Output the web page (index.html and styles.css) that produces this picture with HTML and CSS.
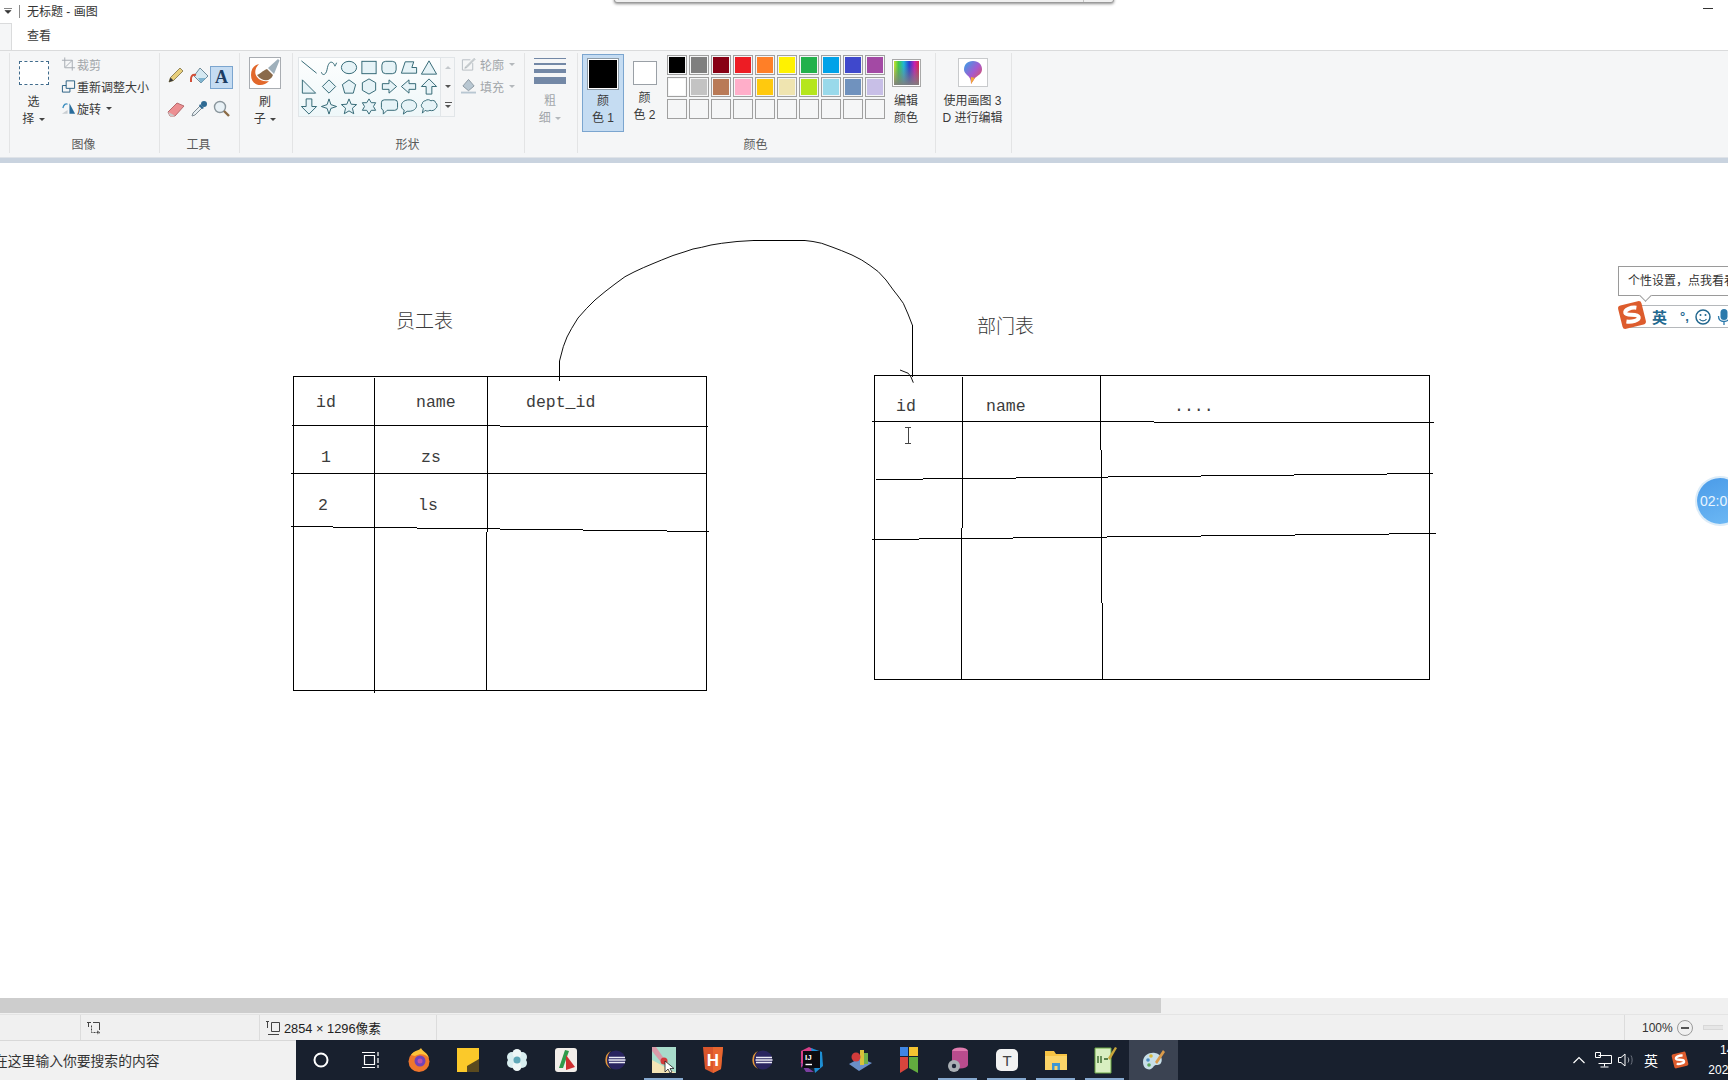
FILE: index.html
```html
<!DOCTYPE html>
<html lang="zh-CN">
<head>
<meta charset="utf-8">
<title>无标题 - 画图</title>
<link rel="stylesheet" href="styles.css">
</head>
<body>
<div class="app">
  <div class="popup-edge"><span class="popup-div"></span></div>

  <header class="titlebar">
    <svg class="qa-arrow" width="8" height="6" viewBox="0 0 8 6"><path d="M0 0.5H8M1 2.5H7L4 5.5Z" fill="#333" stroke="#333" stroke-width=".6"/></svg>
    <span class="qa-sep"></span>
    <span class="title">无标题 - 画图</span>
    <span class="minimize"></span>
  </header>

  <nav class="tabs">
    <span class="tab-home"></span>
    <span class="tab">查看</span>
  </nav>

  <section class="ribbon">
    <div class="group g-image">
      <div class="group-body">
        <div class="big-btn w48">
          <span class="select-box"></span>
          <span class="big-label">选<br>择 <i class="caret"></i></span>
        </div>
        <ul class="small-list">
          <li class="small-row muted">
            <svg class="ico16" viewBox="0 0 16 16"><path d="M4 1V12H15M1 4H12V15M5 11L12 4" fill="none" stroke="#a4aab0"/></svg>裁剪
          </li>
          <li class="small-row">
            <svg class="ico16" viewBox="0 0 16 16"><path d="M5.5 2.5H14.5V10.5H5.5ZM1.5 7.5H5.5M1.5 7.5V14.5H9.5V10.5" fill="none" stroke="#245c80"/></svg>重新调整大小
          </li>
          <li class="small-row">
            <svg class="ico16" viewBox="0 0 16 16"><path d="M9 3L15 14H9Z" fill="#2a6d9c"/><path d="M1 14L7 10V14Z" fill="#c9ced2"/><path d="M2 8C3 4 5 3 7 4" fill="none" stroke="#3d8fc0" stroke-width="1.4"/></svg>旋转 <i class="caret"></i>
          </li>
        </ul>
      </div>
      <div class="group-label">图像</div>
    </div>

    <div class="group g-tools">
      <div class="group-body tool-grid">
        <span class="tool">
          <svg width="18" height="18" viewBox="0 0 18 18"><path d="M2 16L3.5 11.5L13 2L16 5L6.5 14.5Z" fill="#e8cf7c" stroke="#7d7042" stroke-width=".8"/><path d="M2 16L3.5 11.5L6.5 14.5Z" fill="#3a3a3a"/></svg>
        </span>
        <span class="tool">
          <svg width="20" height="20" viewBox="0 0 20 20"><path d="M11 2L19 10L12 17L5 10Z" fill="#d4e8f1" stroke="#6f8b9a"/><path d="M9 12L12 17L17 12Z" fill="#7fb4d0"/><path d="M7 9C3 8 2 11 2 13V16" fill="none" stroke="#d24f38" stroke-width="2"/></svg>
        </span>
        <span class="tool tool-active">A</span>
        <span class="tool">
          <svg width="20" height="20" viewBox="0 0 20 20"><path d="M2 13L11 4L18 7L9 17L4 17Z" fill="#ec8f92" stroke="#b56a6d"/><path d="M2 13L6 15L9 17L4 17Z" fill="#c9c9c9"/></svg>
        </span>
        <span class="tool">
          <svg width="20" height="20" viewBox="0 0 20 20"><path d="M3 17L4 14L11 7L13 9L6 16Z" fill="#e7eef2" stroke="#7f8c94"/><path d="M11 5L15 9L13 10L10 7Z" fill="#2e6a93"/><circle cx="15" cy="5" r="3" fill="#2e6a93"/></svg>
        </span>
        <span class="tool">
          <svg width="20" height="20" viewBox="0 0 20 20"><circle cx="8" cy="8" r="5.5" fill="#e8f1f6" stroke="#8a969d" stroke-width="1.4"/><path d="M12 12L17 17" stroke="#8b6b45" stroke-width="2.4"/></svg>
        </span>
      </div>
      <div class="group-label">工具</div>
    </div>

    <div class="group g-brush">
      <div class="group-body col-center">
        <span class="brush-box">
          <svg width="30" height="30" viewBox="0 0 30 30"><path d="M1 17C1 11 4 7 9 6C5 10 4 15 7 19C10 23 15 24 19 23C13 30 1 28 1 17Z" fill="#e2682b"/><path d="M7 17C10 16 12 13 17 11L23 17C21 23 13 25 7 17Z" fill="#8a6a4a"/><path d="M18 10L28 1L29.500 2.500L24 16Z" fill="#9fb0bb"/></svg>
        </span>
        <span class="big-label">刷<br>子 <i class="caret"></i></span>
      </div>
      <div class="group-label"></div>
    </div>

    <div class="group g-shapes">
      <div class="group-body shapes-body">
        <div class="gallery">
          <div class="shape-grid">
            <svg class="shape" viewBox="0 0 20 20"><path d="M2 3L18 16"/></svg>
            <svg class="shape" viewBox="0 0 20 20"><path class="open" d="M2 15C3 19 7 18 8 12S11 3 14 5S15 12 18 5"/></svg>
            <svg class="shape" viewBox="0 0 20 20"><ellipse cx="10" cy="10" rx="8" ry="6.5"/></svg>
            <svg class="shape" viewBox="0 0 20 20"><rect x="2.5" y="3.5" width="15" height="13"/></svg>
            <svg class="shape" viewBox="0 0 20 20"><rect x="2.5" y="3.5" width="15" height="13" rx="4"/></svg>
            <svg class="shape" viewBox="0 0 20 20"><path d="M2 16L6 4H15L13 10H18V16Z"/></svg>
            <svg class="shape" viewBox="0 0 20 20"><path d="M10 3L18 17H2Z"/></svg>
            <svg class="shape" viewBox="0 0 20 20"><path d="M3 3V17H17Z"/></svg>
            <svg class="shape" viewBox="0 0 20 20"><path d="M10 3L17 10L10 17L3 10Z"/></svg>
            <svg class="shape" viewBox="0 0 20 20"><path d="M10 3L17 8L14.5 17H5.5L3 8Z"/></svg>
            <svg class="shape" viewBox="0 0 20 20"><path d="M10 2L17 6V14L10 18L3 14V6Z"/></svg>
            <svg class="shape" viewBox="0 0 20 20"><path d="M3 7H10V3L18 10L10 17V13H3Z"/></svg>
            <svg class="shape" viewBox="0 0 20 20"><path d="M17 7H10V3L2 10L10 17V13H17Z"/></svg>
            <svg class="shape" viewBox="0 0 20 20"><path d="M10 2L18 10H13V18H7V10H2Z"/></svg>
            <svg class="shape" viewBox="0 0 20 20"><path d="M10 18L18 10H13V2H7V10H2Z"/></svg>
            <svg class="shape" viewBox="0 0 20 20"><path d="M10 2L12 8L18 10L12 12L10 18L8 12L2 10L8 8Z"/></svg>
            <svg class="shape" viewBox="0 0 20 20"><path d="M10 2L12.3 7.6L18 8L13.6 11.8L15 17.6L10 14.6L5 17.6L6.4 11.8L2 8L7.7 7.6Z"/></svg>
            <svg class="shape" viewBox="0 0 20 20"><path d="M10 2L12.4 6H17L14.7 10L17 14H12.4L10 18L7.6 14H3L5.3 10L3 6H7.6Z"/></svg>
            <svg class="shape" viewBox="0 0 20 20"><path d="M5 3H16A3 3 0 0 1 19 6V11A3 3 0 0 1 16 14H8L4 18V14A3 3 0 0 1 2 11V6A3 3 0 0 1 5 3Z"/></svg>
            <svg class="shape" viewBox="0 0 20 20"><path d="M10 3C15 3 18 6 18 9S15 15 10 15H8L4 18L5 14C3 13 2 11 2 9C2 6 5 3 10 3Z"/></svg>
            <svg class="shape" viewBox="0 0 20 20"><path d="M6 4C8 2 11 3 12 4C14 3 17 4 17 6C19 7 19 11 17 12C16 14 13 15 11 14C9 15 7 15 6 14L3 17L4 12C2 11 1 8 3 7C3 5 5 4 6 4Z"/></svg>
          </div>
          <div class="gallery-scroll">
            <span class="gs-btn"><i class="tri-up"></i></span>
            <span class="gs-btn"><i class="tri-down"></i></span>
            <span class="gs-btn"><i class="tri-more"></i></span>
          </div>
        </div>
        <ul class="small-list outline-list">
          <li class="small-row muted">
            <svg class="ico16" viewBox="0 0 16 16"><path d="M1.5 3.5H10M1.5 3.5V14.5H12.5V7" fill="none" stroke="#b5bcc2"/><path d="M5 11L14 2L15 3L6 12L4 12.5Z" fill="#d6dadc" stroke="#9aa2a8" stroke-width=".6"/></svg>轮廓 <i class="caret faded"></i>
          </li>
          <li class="small-row muted">
            <svg class="ico16" viewBox="0 0 16 16"><path d="M8 1L14 8L8 13L2 8Z" fill="#b8c7d2" stroke="#8b98a1"/><path d="M0 15H16" stroke="#b8c7d2" stroke-width="2"/></svg>填充 <i class="caret faded"></i>
          </li>
        </ul>
      </div>
      <div class="group-label">形状</div>
    </div>

    <div class="group g-stroke">
      <div class="group-body col-center">
        <span class="stroke-icon">
          <span class="stroke s1"></span>
          <span class="stroke s2"></span>
          <span class="stroke s3"></span>
          <span class="stroke s4"></span>
        </span>
        <span class="big-label muted">粗<br>细 <i class="caret faded"></i></span>
      </div>
      <div class="group-label"></div>
    </div>

    <div class="group g-colors">
      <div class="group-body colors-body">
        <div class="color-btn active">
          <span class="swatch-large"></span>
          <span class="big-label">颜<br>色 1</span>
        </div>
        <div class="color-btn second">
          <span class="swatch-second"></span>
          <span class="big-label">颜<br>色 2</span>
        </div>
        <div class="palette">
          <span class="cell"><b style="background:#000000"></b></span>
          <span class="cell"><b style="background:#7f7f7f"></b></span>
          <span class="cell"><b style="background:#880015"></b></span>
          <span class="cell"><b style="background:#ed1c24"></b></span>
          <span class="cell"><b style="background:#ff7f27"></b></span>
          <span class="cell"><b style="background:#fff200"></b></span>
          <span class="cell"><b style="background:#22b14c"></b></span>
          <span class="cell"><b style="background:#00a2e8"></b></span>
          <span class="cell"><b style="background:#3f48cc"></b></span>
          <span class="cell"><b style="background:#a349a4"></b></span>
          <span class="cell"><b style="background:#ffffff"></b></span>
          <span class="cell"><b style="background:#c3c3c3"></b></span>
          <span class="cell"><b style="background:#b97a57"></b></span>
          <span class="cell"><b style="background:#ffaec9"></b></span>
          <span class="cell"><b style="background:#ffc90e"></b></span>
          <span class="cell"><b style="background:#efe4b0"></b></span>
          <span class="cell"><b style="background:#b5e61d"></b></span>
          <span class="cell"><b style="background:#99d9ea"></b></span>
          <span class="cell"><b style="background:#7092be"></b></span>
          <span class="cell"><b style="background:#c8bfe7"></b></span>
          <span class="cell"></span><span class="cell"></span><span class="cell"></span><span class="cell"></span><span class="cell"></span>
          <span class="cell"></span><span class="cell"></span><span class="cell"></span><span class="cell"></span><span class="cell"></span>
        </div>
        <div class="edit-colors">
          <span class="rainbow"></span>
          <span class="big-label">编辑<br>颜色</span>
        </div>
      </div>
      <div class="group-label">颜色</div>
    </div>

    <div class="group g-3d">
      <div class="group-body col-center">
        <span class="pin-box">
          <svg width="22" height="25" viewBox="0 0 22 25">
            <defs><linearGradient id="pin" x1="0" y1="0" x2="1" y2="1"><stop offset="0" stop-color="#2fa6e8"/><stop offset=".5" stop-color="#a45ad0"/><stop offset="1" stop-color="#f0503c"/></linearGradient></defs>
            <path d="M11 1C17 1 20 5 20 9.500C20 14 15 16 13 18L9 24C9 20 8 17 5 15C3 13 2 11.500 2 9.500C2 5 5 1 11 1Z" fill="url(#pin)"/>
            <path d="M9 24L13 18L9 17Z" fill="#f2a63a"/>
          </svg>
        </span>
        <span class="big-label nowrap">使用画图 3<br>D 进行编辑</span>
      </div>
      <div class="group-label"></div>
    </div>
  </section>
  <div class="ribbon-edge"></div>

  <main class="canvas">
    <svg class="drawing" viewBox="0 163 1728 835" width="1728" height="835">
      <g class="ink">
        <path d="M293.500 376.500H706.500V690.500H293.500Z"/>
        <path d="M374.500 378V693M487.500 376V532M486.500 532V690"/>
        <path d="M292 425.500H500M500 426.500H708"/>
        <path d="M291 473.500H706"/>
        <path d="M291 526.500H333M333 527.500H417M417 528.500H500M500 529.500H583M583 530.500H667M667 531.500H709"/>
        <path d="M874.500 375.500H1429.500V679.500H874.500Z"/>
        <path d="M962.500 377V528M961.500 528V679M1100.500 375V450M1101.500 450V603M1102.500 603V679"/>
        <path d="M872 421.500H1154M1154 422.500H1434"/>
        <path d="M876 479.500H923M923 478.500H1016M1016 477.500H1108M1108 476.500H1201M1201 475.500H1294M1294 474.500H1387M1387 473.500H1433"/>
        <path d="M872 539.500H919M919 538.500H1013M1013 537.500H1107M1107 536.500H1201M1201 535.500H1295M1295 534.500H1389M1389 533.500H1436"/>
        <path d="M559.500 381V361M912.500 325V377M753 240.500H805"/>
      </g>
      <polyline class="pen" points="559.500,361 563.300,346.700 567,337 571.700,328.300 578,318 586.700,308.300 595,300 605,291.700 615,284 625,276.700 634,272 643.300,267.700 652,264 661.700,260 673,255.500 685,251.700 693,249 701.700,247.300 711,245 721.700,243.300 737,241.500 753.300,240.500"/>
      <polyline class="pen" points="805,240.500 813,241.500 821.700,243.300 832,247 841.700,250.700 852,255 861.700,260 870,265.500 878.300,271.700 886,280 893.300,290 898,296 903.300,303.300 908,314 912.300,325"/>
      <polyline class="pen" points="900,370 908.300,373.300 911,377 913.300,382.700"/>
      <path class="cursor-i" d="M905 427.500H911M908 427.500V443M905 443.500H911"/>

      <text class="cjk" x="396" y="328">员工表</text>
      <text class="cjk" x="977" y="333">部门表</text>
      <text class="mono" x="316" y="407">id</text>
      <text class="mono" x="416" y="407">name</text>
      <text class="mono" x="526" y="407">dept_id</text>
      <text class="mono" x="321" y="462">1</text>
      <text class="mono" x="421" y="462">zs</text>
      <text class="mono" x="318" y="510">2</text>
      <text class="mono" x="418" y="510">ls</text>
      <text class="mono" x="896" y="411">id</text>
      <text class="mono" x="986" y="411">name</text>
      <text class="mono" x="1174" y="411">....</text>
    </svg>

    <div class="ime-tip">个性设置，点我看看吧</div>
    <div class="ime-bar">
      <span class="ime-zh">英</span>
      <span class="ime-punct">°,</span>
      <svg class="ime-ico" width="18" height="18" viewBox="0 0 18 18"><circle cx="9" cy="9" r="7" fill="none" stroke="#23688f" stroke-width="1.500"/><circle cx="6.500" cy="7" r="1" fill="#23688f"/><circle cx="11.500" cy="7" r="1" fill="#23688f"/><path d="M5.500 11C7 13.500 11 13.500 12.500 11" fill="none" stroke="#23688f" stroke-width="1.200"/></svg>
      <svg class="ime-ico" width="14" height="18" viewBox="0 0 14 18"><rect x="3.500" y="1" width="7" height="11" rx="3.500" fill="#2b79ab"/><path d="M1.500 8C1.500 12 4 13.500 7 13.500S12.500 12 12.500 8M7 14V17" fill="none" stroke="#2b79ab" stroke-width="1.300"/></svg>
    </div>
    <svg class="ime-logo" width="30" height="30" viewBox="0 0 30 30">
      <rect x="3" y="3" width="24" height="24" rx="3" transform="rotate(-14 15 15)" fill="#dd5c2d"/>
      <path d="M21 9C16 7 9 8 9 11.500C9 15 21 14 21 18.500C21 22 13 22 8 20" fill="none" stroke="#fff" stroke-width="4" transform="rotate(-14 15 15)"/>
    </svg>
    <div class="timer">02:07</div>
  </main>

  <div class="hscroll"><span class="hscroll-thumb"></span></div>

  <footer class="status">
    <span class="st-cell st-a"></span>
    <span class="st-cell st-b">
      <svg width="16" height="16" viewBox="0 0 16 16"><path d="M2.500 2V7M1 2.500H5M7 2.500H13.500V10" fill="none" stroke="#444"/><path d="M5.500 5.500V12.500H13M11 11L14 12.500L11 14" fill="none" stroke="#444" stroke-dasharray="2 1"/></svg>
    </span>
    <span class="st-cell st-c">
      <svg width="16" height="16" viewBox="0 0 16 16"><path d="M1 1.500H4M2.500 1.500V8M6.500 2.500H14.500V11.500H6.500ZM3 14.500H14" fill="none" stroke="#444"/></svg>
      <span class="st-size">2854 × 1296像素</span>
    </span>
    <span class="st-spacer"></span>
    <span class="st-zoom">
      <span class="st-pct">100%</span>
      <span class="zoom-minus"></span>
      <span class="zoom-track"></span>
    </span>
  </footer>

  <div class="taskbar">
    <div class="search"><span>在这里输入你要搜索的内容</span></div>
    <div class="task-items">
      <span class="task-item">
        <svg width="24" height="24" viewBox="0 0 24 24"><circle cx="12" cy="12" r="6.500" fill="none" stroke="#fff" stroke-width="2"/></svg>
      </span>
      <span class="task-item">
        <svg width="24" height="24" viewBox="0 0 24 24"><path d="M6.500 7.500H16.500V16.500H6.500ZM4 4.500H17M4 19.500H17M20 4V8M20 10V15M20 17V20" fill="none" stroke="#fff" stroke-width="1.200"/></svg>
      </span>
      <span class="task-item">
        <svg width="26" height="26" viewBox="0 0 26 26"><circle cx="13" cy="14.500" r="10.500" fill="#f0762c"/><path d="M5 8C8 3 13 4 15 1C16 4 21 5 23 11C20 7 14 6 9 9Z" fill="#fcc23a"/><circle cx="14" cy="14" r="5.500" fill="#7343b8"/><circle cx="14" cy="14" r="2.500" fill="#c04fa9"/></svg>
      </span>
      <span class="task-item">
        <svg width="24" height="24" viewBox="0 0 24 24"><path d="M1 0H23V24H1Z" fill="#fbc92a"/><path d="M23 11V24H11V18Z" fill="#5a4a1f"/></svg>
      </span>
      <span class="task-item">
        <svg width="24" height="24" viewBox="0 0 24 24"><circle cx="7" cy="9" r="5" fill="#d8eef0"/><circle cx="17" cy="9" r="5" fill="#d8eef0"/><circle cx="7" cy="15" r="5" fill="#d8eef0"/><circle cx="17" cy="15" r="5" fill="#d8eef0"/><circle cx="12" cy="5.500" r="4.500" fill="#eef7f7"/><circle cx="12" cy="18.500" r="4.500" fill="#eef7f7"/><circle cx="12" cy="12" r="3.500" fill="#5fa8b8"/></svg>
      </span>
      <span class="task-item">
        <svg width="24" height="26" viewBox="0 0 24 26"><rect x="1" y="1" width="22" height="24" rx="3" fill="#f2eeea"/><path d="M5 21L11 3L15 4L9 21Z" fill="#2f9a4a"/><path d="M12 8L21 20L12 23Z" fill="#cf2f30"/></svg>
      </span>
      <span class="task-item">
        <svg width="26" height="26" viewBox="0 0 26 26"><circle cx="14" cy="13" r="9.500" fill="#29245f"/><path d="M9 4A10 10 0 0 0 9 22A12 12 0 0 1 9 4Z" fill="#e79a3b"/><path d="M7 10.500H23M6.500 13H23.500M7 15.500H23" stroke="#ecebf5" stroke-width="1.300"/></svg>
      </span>
      <span class="task-item open">
        <svg width="26" height="28" viewBox="0 0 26 28"><rect x="1" y="1" width="24" height="26" fill="#a8dccb"/><path d="M1 14L25 27H1Z" fill="#f4e4b5"/><path d="M5 1L14 14L9 15L1 5V1Z" fill="#d99aa8"/><circle cx="13" cy="15" r="3.500" fill="#d23b3b"/><path d="M14 15V26L17 23L19 27L21 26L19 22.500H23Z" fill="#fff" stroke="#222" stroke-width=".8"/></svg>
      </span>
      <span class="task-item">
        <svg width="22" height="26" viewBox="0 0 22 26"><path d="M1 0H21L19 22L11 26L3 22Z" fill="#d9552c"/><path d="M11 0H21L19 22L11 26Z" fill="#e8662f"/><text class="h-glyph" x="11" y="18.500">H</text></svg>
      </span>
      <span class="task-item">
        <svg width="26" height="26" viewBox="0 0 26 26"><circle cx="14" cy="13" r="9.500" fill="#29245f"/><path d="M9 4A10 10 0 0 0 9 22A12 12 0 0 1 9 4Z" fill="#e79a3b"/><path d="M7 10.500H23M6.500 13H23.500M7 15.500H23" stroke="#ecebf5" stroke-width="1.300"/></svg>
      </span>
      <span class="task-item">
        <svg width="26" height="28" viewBox="0 0 26 28"><path d="M3 5L11 1L15 3L3 22Z" fill="#d83f87"/><path d="M13 2L24 6L25 20L17 27Z" fill="#1e8fd4"/><path d="M2 16L8 26H16Z" fill="#7b3fa0"/><rect x="5" y="5" width="17" height="17" fill="#0b0b10"/><text class="ij-glyph" x="7" y="14">IJ</text><path d="M7.500 18.500H14" stroke="#fff" stroke-width="1.400"/></svg>
      </span>
      <span class="task-item">
        <svg width="26" height="24" viewBox="0 0 26 24"><path d="M2 16L13 10L25 15L12 23Z" fill="#6a8fc8"/><rect x="13" y="2" width="4" height="15" fill="#d9c23a"/><rect x="17" y="5" width="4" height="11" fill="#6fb04b"/><circle cx="9" cy="9" r="4.500" fill="#d23b3b"/></svg>
      </span>
      <span class="task-item">
        <svg width="20" height="28" viewBox="0 0 20 28"><rect x="1" y="1" width="8" height="9" fill="#3f86e4"/><rect x="10" y="1" width="9" height="9" fill="#f4c331"/><path d="M1 11H9V22L1 27Z" fill="#d8453d"/><path d="M10 11H19V27L10 22Z" fill="#62ac3f"/></svg>
      </span>
      <span class="task-item">
        <svg width="24" height="28" viewBox="0 0 24 28"><ellipse cx="14" cy="5" ry="3.500" rx="8" fill="#e07cb0"/><rect x="6" y="5" width="16" height="14" fill="#b94c8d"/><ellipse cx="14" cy="19" rx="8" ry="3.500" fill="#b94c8d"/><circle cx="8" cy="20" r="6" fill="#aab0b5"/><circle cx="8" cy="20" r="2.200" fill="#20283a"/></svg>
      </span>
      <span class="task-item">
        <svg width="24" height="24" viewBox="0 0 24 24"><rect x="1" y="1" width="22" height="22" rx="5" fill="#f2f2f2"/><text class="t-glyph" x="12" y="17.500">T</text></svg>
      </span>
      <span class="task-item">
        <svg width="24" height="22" viewBox="0 0 24 22"><path d="M1 2H10L12 5H23V21H1Z" fill="#f6c344"/><path d="M1 7H23V21H1Z" fill="#fbd468"/><path d="M8 21V14H16V21H13.500V17H10.500V21Z" fill="#3d97d3"/></svg>
      </span>
      <span class="task-item">
        <svg width="24" height="28" viewBox="0 0 24 28"><path d="M2 2H18V27H2Z" fill="#d9efc1" stroke="#6aa644"/><path d="M5 10V17M8 10V17M11 13H15" stroke="#2f5f23" stroke-width="1.300"/><path d="M15 12L22 1L24 2L17 14Z" fill="#c9a63a"/></svg>
      </span>
      <span class="task-item current">
        <svg width="26" height="26" viewBox="0 0 26 26"><path d="M2 15C2 8 9 5 14 6C20 7 22 12 20 16C18 19 15 17 13 19C11 22 9 23 6 22C3 21 2 18 2 15Z" fill="#c8dfe8"/><circle cx="7" cy="13" r="1.800" fill="#4b8cc4"/><circle cx="10" cy="9" r="1.800" fill="#d8b93a"/><circle cx="8" cy="18" r="1.800" fill="#5aa65a"/><path d="M14 15L22 3L24 5L16 17Z" fill="#d99a4a"/></svg>
      </span>
    </div>
    <div class="tray">
      <span class="tray-item w24">
        <svg width="14" height="10" viewBox="0 0 14 10"><path d="M1.500 8L7 2.500L12.500 8" fill="none" stroke="#fff" stroke-width="1.200"/></svg>
      </span>
      <span class="tray-item w24">
        <svg width="18" height="16" viewBox="0 0 18 16"><path d="M4.500 3.500H17.500V11.500H4.500M1.500 .5H6.500V5.500H1.500ZM10.500 11.500V14.500M6.500 15H14.500" fill="none" stroke="#fff"/></svg>
      </span>
      <span class="tray-item w22">
        <svg width="18" height="14" viewBox="0 0 18 14"><path d="M1.500 4.500H4L8 1V13L4 9.500H1.500Z" fill="none" stroke="#fff"/><path d="M11 4.500C12 6 12 8 11 9.500" fill="none" stroke="#b6bac1"/><path d="M14 2.500C15.500 5 15.500 9 14 11.500" fill="none" stroke="#6e7480"/></svg>
      </span>
      <span class="tray-item w28 tray-text">英</span>
      <span class="tray-item w30">
        <svg width="18" height="18" viewBox="0 0 30 30"><rect x="3" y="3" width="24" height="24" rx="3" transform="rotate(-14 15 15)" fill="#dd5c2d"/><path d="M21 9C16 7 9 8 9 11.500C9 15 21 14 21 18.500C21 22 13 22 8 20" fill="none" stroke="#fff" stroke-width="4" transform="rotate(-14 15 15)"/></svg>
      </span>
      <span class="clock">
        <span class="clock-line">14:32</span>
        <span class="clock-line">2021/3/12</span>
      </span>
    </div>
  </div>
</div>
</body>
</html>
```
FILE: styles.css
```css
* { box-sizing: border-box; }
html, body { margin: 0; padding: 0; }
body { background: #fff; overflow: hidden; }
ul { list-style: none; margin: 0; padding: 0; }

.app {
  position: relative;
  width: 1728px;
  height: 1080px;
  overflow: hidden;
  display: flex;
  flex-direction: column;
  font-family: "Liberation Sans", "Noto Sans CJK SC", sans-serif;
  font-size: 12px;
  color: #3a3a3a;
}

.popup-edge {
  position: absolute;
  left: 614px;
  top: -10px;
  width: 500px;
  height: 13px;
  background: #f0f0f0;
  border: 1px solid #9a9a9a;
  border-radius: 0 0 3px 3px;
  box-shadow: 0 1px 3px rgba(0, 0, 0, .45);
  z-index: 3;
}
.popup-div {
  position: absolute;
  left: 468px;
  top: 0;
  bottom: 0;
  border-left: 1px solid #c4c4c4;
}

/* title bar */
.titlebar {
  height: 22px;
  flex: none;
  display: flex;
  align-items: center;
  background: #fff;
}
.qa-arrow { margin-left: 4px; }
.qa-sep { width: 1px; height: 13px; background: #8c8c8c; margin-left: 7px; }
.title { margin-left: 7px; margin-top: -2px; color: #333; white-space: nowrap; }
.minimize { width: 10px; height: 1px; background: #333; margin-left: auto; margin-right: 15px; margin-top: -6px; }

.tabs {
  height: 28px;
  flex: none;
  display: flex;
  background: #fff;
}
.tab-home {
  width: 12px;
  margin-top: 1px;
  background: #f5f6f7;
  border-top: 1px solid #dadbdc;
  border-right: 1px solid #dadbdc;
}
.tab { margin-left: 15px; line-height: 28px; color: #3a3a3a; }

/* ribbon */
.ribbon {
  height: 107px;
  flex: none;
  display: flex;
  padding-left: 9px;
  background: #f5f6f7;
  border-top: 1px solid #dadbdc;
}
.ribbon-edge {
  height: 6px;
  flex: none;
  background: #c9d3df;
  border-top: 1px solid #dfe3e8;
}
.group {
  display: flex;
  flex-direction: column;
  border-left: 1px solid #e3e4e5;
  margin-top: 2px;
  height: 100px;
}
.group-body { height: 80px; flex: none; display: flex; align-items: flex-start; }
.group-label {
  height: 20px;
  flex: none;
  padding-top: 2px;
  margin-left: -2px;
  line-height: 20px;
  text-align: center;
  color: #5a5a5a;
}
.g-image { width: 150px; }
.g-tools { width: 80px; }
.g-brush { width: 53px; }
.g-shapes { width: 232px; }
.g-stroke { width: 53px; }
.g-colors { width: 358px; }
.g-3d { width: 77px; border-right: 1px solid #e3e4e5; }

.big-label {
  display: block;
  text-align: center;
  line-height: 16.500px;
  color: #3a3a3a;
}
.nowrap { white-space: nowrap; }
.muted, .big-label.muted { color: #a2a6aa; }
.caret {
  display: inline-block;
  width: 0;
  height: 0;
  border: 3px solid transparent;
  border-top: 3px solid #444;
  border-bottom: 0;
  vertical-align: middle;
  margin-left: 1px;
}
.caret.faded { border-top-color: #b4b8bc; }

.col-center { flex-direction: column; align-items: center; margin-left: -2px; }

.big-btn { display: flex; flex-direction: column; align-items: center; padding-top: 8px; }
.w48 { width: 47px; }
.select-box {
  width: 30px;
  height: 24px;
  border: 1px dashed #3f6b8c;
  background: #fff;
  margin-bottom: 9px;
}
.small-list { margin-left: 4px; }
.small-row {
  display: flex;
  align-items: center;
  height: 22px;
  white-space: nowrap;
  gap: 1px;
}
.small-row .caret { margin-left: 4px; }
.ico16 { width: 15px; height: 16px; flex: none; }

/* tools */
.tool-grid {
  display: grid;
  grid-template-columns: repeat(3, 23px);
  grid-template-rows: 22px 22px;
  row-gap: 11px;
  padding: 13px 0 0 4px;
}
.tool { display: flex; align-items: center; justify-content: center; }
.tool-active {
  background: #c5dcf2;
  border: 1px solid #7ba5cf;
  font-family: "Liberation Serif", serif;
  font-weight: 700;
  font-size: 18px;
  color: #1d3c63;
}

/* brush */
.brush-box {
  width: 32px;
  height: 32px;
  margin-top: 4px;
  margin-bottom: 5px;
  background: #fff;
  border: 1px solid #a9adb2;
  display: flex;
  align-items: center;
  justify-content: center;
}

/* shapes */
.shapes-body { padding-left: 5px; }
.gallery {
  display: flex;
  width: 157px;
  height: 60px;
  margin-top: 4px;
  border: 1px solid #e1e5e8;
}
.shape-grid {
  display: grid;
  grid-template-columns: repeat(7, 20px);
  grid-auto-rows: 19.300px;
  width: 141px;
  background: linear-gradient(180deg, #fdfefe, #eef7f9);
}
.shape { width: 20px; height: 19px; fill: #e6f3f7; stroke: #2f6572; stroke-width: 1; }
.shape .open { fill: none; }
.gallery-scroll { flex: 1; display: flex; flex-direction: column; border-left: 1px solid #e1e5e8; }
.gs-btn { flex: 1; display: flex; align-items: center; justify-content: center; }
.tri-up, .tri-down { width: 0; height: 0; border: 3px solid transparent; }
.tri-up { border-top: 0; border-bottom-color: #c4c8cc; }
.tri-down { border-bottom: 0; border-top-color: #555; }
.tri-more {
  width: 0; height: 0;
  border: 3px solid transparent;
  border-bottom: 0;
  border-top-color: #555;
  position: relative;
}
.tri-more::before {
  content: "";
  position: absolute;
  left: -3px;
  top: -6px;
  width: 7px;
  height: 1px;
  background: #555;
}
.outline-list { margin-left: 6px; }
.outline-list .ico16 { margin-right: 3px; }

/* stroke */
.stroke-icon { display: flex; flex-direction: column; width: 32px; margin-top: 4px; margin-bottom: 8px; height: 28px; }
.stroke { display: block; background: #7388a6; }
.s1 { height: 1px; margin-top: 1px; }
.s2 { height: 2px; margin-top: 4px; }
.s3 { height: 4px; margin-top: 4px; }
.s4 { height: 7px; margin-top: 4px; }

/* colours */
.colors-body { padding-left: 4px; }
.color-btn { display: flex; flex-direction: column; align-items: center; }
.color-btn.active {
  width: 42px;
  height: 78px;
  margin-top: 1px;
  background: #c5dcf2;
  border: 1px solid #7ba5cf;
  padding-top: 3px;
}
.swatch-large {
  width: 32px;
  height: 32px;
  background: #000;
  border: 1px solid #8c9aa6;
  box-shadow: inset 0 0 0 1px #fff;
  margin-bottom: 3px;
}
.color-btn.second { width: 41px; padding-top: 8px; }
.swatch-second {
  width: 24px;
  height: 24px;
  background: #fff;
  border: 1px solid #9aa0a6;
  margin-bottom: 5px;
}
.palette {
  display: grid;
  grid-template-columns: repeat(10, 20px);
  grid-auto-rows: 20px;
  gap: 2px;
  margin-left: 2px;
  margin-top: 2px;
}
.cell {
  display: block;
  border: 1px solid #a0a0a0;
  padding: 1px;
}
.cell b { display: block; width: 100%; height: 100%; }
.edit-colors { display: flex; flex-direction: column; align-items: center; width: 30px; margin-left: 6px; padding-top: 6px; }
.rainbow {
  width: 29px;
  height: 28px;
  border: 1px solid #a8a8a8;
  box-shadow: inset 0 0 0 1px #fff;
  background:
    linear-gradient(180deg, rgba(128,128,128,0) 20%, #7f7f7f 100%),
    linear-gradient(90deg, #e8e82a, #45c845, #1fb5d8, #2a3fd0, #c81fb0, #d83030);
  margin-bottom: 6px;
}

/* 3D */
.pin-box {
  width: 30px;
  height: 29px;
  margin-top: 5px;
  margin-bottom: 6px;
  background: #fff;
  border: 1px solid #c8cacc;
  display: flex;
  align-items: center;
  justify-content: center;
}

/* canvas */
.canvas {
  position: relative;
  height: 835px;
  flex: none;
  background: #fff;
  overflow: hidden;
}
.drawing { display: block; }
.ink { fill: none; stroke: #000; stroke-width: 1; shape-rendering: crispEdges; }
.pen { fill: none; stroke: #111; stroke-width: 1; }
.cursor-i { fill: none; stroke: #444; stroke-width: 1; shape-rendering: crispEdges; }
.cjk {
  font-family: "Noto Sans CJK SC", sans-serif;
  font-weight: 300;
  font-size: 19px;
  fill: #3a3a3a;
}
.mono {
  font-family: "Liberation Mono", monospace;
  font-size: 16.500px;
  fill: #3c3c3c;
}

.ime-tip {
  position: absolute;
  left: 1618px;
  top: 103px;
  width: 160px;
  height: 30px;
  line-height: 28px;
  padding-left: 9px;
  background: #fff;
  border: 1px solid #9a9a9a;
  color: #333;
  white-space: nowrap;
}
.ime-tip::after {
  content: "";
  position: absolute;
  left: 22px;
  bottom: -5px;
  width: 8px;
  height: 8px;
  background: #fff;
  border-right: 1px solid #9a9a9a;
  border-bottom: 1px solid #9a9a9a;
  transform: rotate(45deg);
}
.ime-bar {
  position: absolute;
  left: 1630px;
  top: 142px;
  width: 130px;
  height: 23px;
  background: #fff;
  border: 1px solid #b5b8bb;
  border-right: 0;
  display: flex;
  align-items: center;
  padding-left: 21px;
}
.ime-zh { font-weight: 700; font-size: 15px; color: #23688f; line-height: 20px; font-family: "Noto Sans CJK SC", sans-serif; }
.ime-punct { margin-left: 13px; font-weight: 700; font-size: 13px; color: #23688f; line-height: 20px; }
.ime-ico { margin-left: 5px; flex: none; }
.ime-logo { position: absolute; left: 1617px; top: 137px; }
.timer {
  position: absolute;
  left: 1697px;
  top: 315px;
  width: 46px;
  height: 46px;
  border-radius: 50%;
  background: linear-gradient(160deg, #4a9be8, #6fbaf5);
  box-shadow: 0 0 0 2px #dcecf8;
  color: #e8f5ff;
  font-size: 14px;
  line-height: 46px;
  padding-left: 3px;
  white-space: nowrap;
}

/* scrollbar + status */
.hscroll { height: 16px; flex: none; background: #f0f0f0; }
.hscroll-thumb { display: block; width: 1161px; height: 15px; background: #cdcdcd; }

.status {
  height: 26px;
  flex: none;
  display: flex;
  background: #f0f0f0;
  border-top: 1px solid #e4e4e4;
  color: #222;
}
.st-cell {
  display: flex;
  align-items: center;
  border-right: 1px solid #dcdcdc;
  gap: 4px;
  padding-left: 5px;
  white-space: nowrap;
}
.st-a { width: 81px; }
.st-b { width: 179px; }
.st-c { width: 177px; }
.st-size { font-size: 12.800px; margin-left: -1px; }
.st-spacer { flex: 1; border-right: 1px solid #dcdcdc; }
.st-zoom { width: 103px; display: flex; align-items: center; padding-left: 17px; }
.st-pct { width: 35px; color: #333; }
.zoom-minus {
  position: relative;
  width: 16px;
  height: 16px;
  border-radius: 50%;
  border: 1px solid #9a9a9a;
}
.zoom-minus::before {
  content: "";
  position: absolute;
  left: 3px;
  right: 3px;
  top: 6px;
  height: 2px;
  background: #555;
}
.zoom-track { width: 20px; height: 5px; margin-left: 10px; background: #e6e6e6; border: 1px solid #d8d8d8; border-right: 0; }

/* taskbar */
.taskbar {
  height: 40px;
  flex: none;
  display: flex;
  background: #18202e;
}
.search {
  width: 296px;
  flex: none;
  background: #f1f1f1;
  border-top: 1px solid #d8d8d8;
  overflow: hidden;
  display: flex;
  align-items: center;
  font-size: 13.800px;
  color: #333;
  white-space: nowrap;
  padding-bottom: 2px;
}
.search span { margin-left: -6px; }
.task-items { display: flex; flex: none; }
.task-item {
  position: relative;
  width: 49px;
  height: 40px;
  display: flex;
  align-items: center;
  justify-content: center;
}
.task-item.open::after,
.task-item:nth-child(14)::after,
.task-item:nth-child(15)::after,
.task-item:nth-child(16)::after,
.task-item:nth-child(17)::after {
  content: "";
  position: absolute;
  left: 5px;
  right: 5px;
  bottom: 0;
  height: 2px;
  background: #86a9cf;
}
.task-item.current { background: #3b4352; }
.h-glyph {
  font-family: "Liberation Sans", sans-serif;
  font-weight: 700;
  font-size: 17px;
  fill: #fff;
  text-anchor: middle;
}
.ij-glyph {
  font-family: "Liberation Sans", sans-serif;
  font-weight: 700;
  font-size: 8px;
  fill: #fff;
}
.t-glyph {
  font-family: "Liberation Sans", sans-serif;
  font-size: 15px;
  fill: #444;
  text-anchor: middle;
}

.tray { margin-left: auto; width: 161px; display: flex; align-items: center; color: #fff; }
.tray-item { display: flex; align-items: center; justify-content: center; flex: none; height: 40px; }
.w24 { width: 24px; }
.w22 { width: 22px; }
.w28 { width: 28px; }
.w30 { width: 30px; }
.tray-text { font-size: 14px; }
.clock { width: 26px; margin-left: 7px; flex: none; display: block; }
.clock-line { display: block; width: 66px; text-align: center; line-height: 20px; white-space: nowrap; }
```
